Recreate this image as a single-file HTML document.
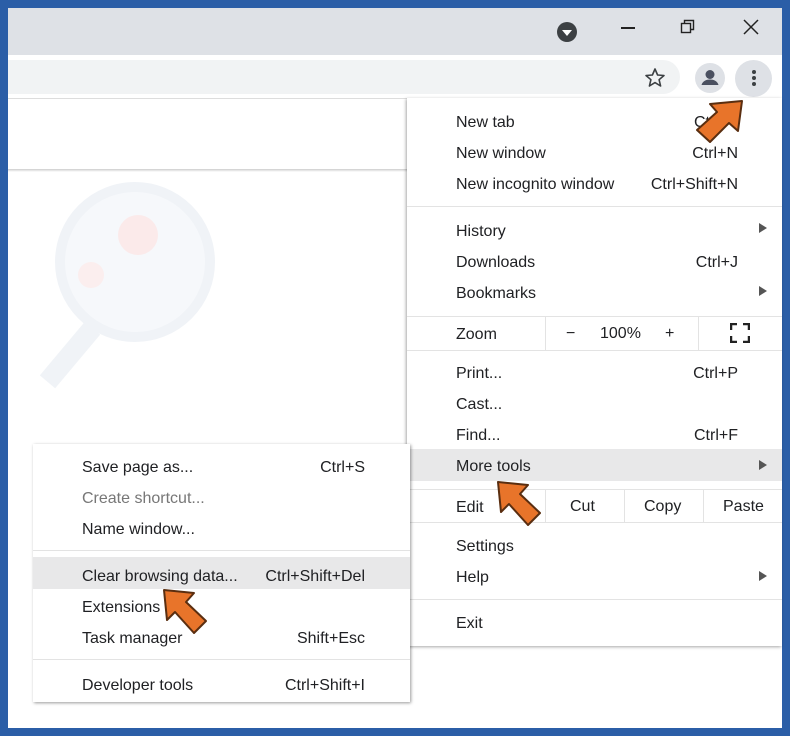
<!DOCTYPE html><html><head><style>
*{margin:0;padding:0;box-sizing:border-box}
body{width:790px;height:736px;background:#2b5ea7;position:relative;overflow:hidden;font-family:"Liberation Sans",sans-serif;color:#202124;font-size:16px}
.a{position:absolute}
.win{left:8px;top:8px;width:774px;height:720px;background:#fff}
.t{position:absolute;white-space:nowrap;line-height:20px;margin-top:2px}
.sep{position:absolute;height:1px;background:#e3e3e3}
.sc{position:absolute;white-space:nowrap;line-height:20px;text-align:right;margin-top:2px}
</style></head><body>
<div class="a win"></div>
<div class="a" style="left:8px;top:8px;width:774px;height:47px;background:#dee1e6"></div>
<div class="a" style="left:8px;top:55px;width:774px;height:43px;background:#fff"></div>
<div class="a" style="left:8px;top:60px;width:672px;height:34px;background:#f1f3f4;border-radius:0 17px 17px 0"></div>
<div class="a" style="left:8px;top:98px;width:399px;height:1px;background:#ddd"></div>
<div class="a" style="left:8px;top:169px;width:399px;height:3px;background:linear-gradient(#ccc,#fff)"></div>
<div class="a" style="left:55px;top:182px;width:160px;height:160px;border-radius:50%;border:10px solid #f0f3f7;background:#f6f8fb"></div>
<div class="a" style="left:118px;top:215px;width:40px;height:40px;border-radius:50%;background:#fbeaea"></div>
<div class="a" style="left:78px;top:262px;width:26px;height:26px;border-radius:50%;background:#fbeeee"></div>
<div class="a" style="left:60px;top:320px;width:20px;height:70px;background:#f0f3f7;transform:rotate(40deg)"></div>
<!-- title bar icons -->
<svg class="a" style="left:556px;top:21px" width="22" height="22"><circle cx="11" cy="11" r="10" fill="#3c4043"/><path d="M6 9h10l-5 6z" fill="#fff"/></svg>
<div class="a" style="left:621px;top:27px;width:14px;height:1.5px;background:#222"></div>
<svg class="a" style="left:680px;top:19px" width="16" height="16"><rect x="1.5" y="4.5" width="9" height="9" fill="none" stroke="#222" stroke-width="1.4"/><path d="M4.5 4.5V1.5h9v9h-3" fill="none" stroke="#222" stroke-width="1.4"/></svg>
<svg class="a" style="left:743px;top:19px" width="16" height="16"><path d="M1 1L15 15M15 1L1 15" stroke="#222" stroke-width="1.5"/></svg>
<svg class="a" style="left:644px;top:67px" width="22" height="22"><path d="M11 2l2.6 6 6.4.5-4.9 4.2 1.5 6.3L11 15.6 5.4 19l1.5-6.3L2 8.5l6.4-.5z" fill="none" stroke="#3c4043" stroke-width="1.6" stroke-linejoin="round"/></svg>
<svg class="a" style="left:694px;top:62px" width="32" height="32"><circle cx="16" cy="16" r="15" fill="#dee1e6"/><circle cx="16" cy="12.5" r="4.5" fill="#4a5060"/><path d="M7.5 23c1-4 5-5.5 8.5-5.5s7.5 1.5 8.5 5.5z" fill="#4a5060"/></svg>
<div class="a" style="left:735px;top:60px;width:37px;height:37px;border-radius:50%;background:#dee1e6"></div>
<div class="a" style="left:752px;top:70px;width:4px;height:4px;border-radius:50%;background:#3c4043;box-shadow:0 6px 0 #3c4043,0 12px 0 #3c4043"></div>
<!-- main menu -->
<div class="a" style="left:407px;top:98px;width:375px;height:548px;background:#fff;box-shadow:-1px 1px 3px rgba(0,0,0,.35)"></div>
<div class="a" style="left:407px;top:449px;width:375px;height:32px;background:#e8e8e9"></div>
<div class="t" style="left:456px;top:111px">New tab</div><div class="sc" style="left:600px;top:111px;width:138px">Ctrl+T</div>
<div class="t" style="left:456px;top:142px">New window</div><div class="sc" style="left:600px;top:142px;width:138px">Ctrl+N</div>
<div class="t" style="left:456px;top:173px">New incognito window</div><div class="sc" style="left:600px;top:173px;width:138px">Ctrl+Shift+N</div>
<div class="sep" style="left:407px;top:206px;width:375px"></div>
<div class="t" style="left:456px;top:220px">History</div>
<div class="t" style="left:456px;top:251px">Downloads</div><div class="sc" style="left:600px;top:251px;width:138px">Ctrl+J</div>
<div class="t" style="left:456px;top:282px">Bookmarks</div>
<div class="sep" style="left:407px;top:316px;width:375px"></div>
<div class="t" style="left:456px;top:323px">Zoom</div>
<div class="a" style="left:545px;top:316px;width:1px;height:34px;background:#e3e3e3"></div>
<div class="a" style="left:698px;top:316px;width:1px;height:34px;background:#e3e3e3"></div>
<div class="t" style="left:566px;top:322px">−</div>
<div class="t" style="left:600px;top:322px">100%</div>
<div class="t" style="left:665px;top:322px">+</div>
<svg class="a" style="left:730px;top:323px" width="20" height="20"><path d="M1 7V1h6M13 1h6v6M19 13v6h-6M7 19H1v-6" fill="none" stroke="#222" stroke-width="2.5"/></svg>
<div class="sep" style="left:407px;top:350px;width:375px"></div>
<div class="t" style="left:456px;top:362px">Print...</div><div class="sc" style="left:600px;top:362px;width:138px">Ctrl+P</div>
<div class="t" style="left:456px;top:393px">Cast...</div>
<div class="t" style="left:456px;top:424px">Find...</div><div class="sc" style="left:600px;top:424px;width:138px">Ctrl+F</div>
<div class="t" style="left:456px;top:455px">More tools</div>
<div class="sep" style="left:407px;top:489px;width:375px"></div>
<div class="t" style="left:456px;top:496px">Edit</div>
<div class="a" style="left:545px;top:489px;width:1px;height:33px;background:#e3e3e3"></div>
<div class="a" style="left:624px;top:489px;width:1px;height:33px;background:#e3e3e3"></div>
<div class="a" style="left:703px;top:489px;width:1px;height:33px;background:#e3e3e3"></div>
<div class="t" style="left:570px;top:495px">Cut</div>
<div class="t" style="left:644px;top:495px">Copy</div>
<div class="t" style="left:723px;top:495px">Paste</div>
<div class="sep" style="left:407px;top:522px;width:375px"></div>
<div class="t" style="left:456px;top:535px">Settings</div>
<div class="t" style="left:456px;top:566px">Help</div>
<div class="sep" style="left:407px;top:599px;width:375px"></div>
<div class="t" style="left:456px;top:612px">Exit</div>
<svg class="a" style="left:758px;top:222px" width="10" height="12"><path d="M1 1l8 5-8 5z" fill="#555"/></svg>
<svg class="a" style="left:758px;top:285px" width="10" height="12"><path d="M1 1l8 5-8 5z" fill="#555"/></svg>
<svg class="a" style="left:758px;top:459px" width="10" height="12"><path d="M1 1l8 5-8 5z" fill="#555"/></svg>
<svg class="a" style="left:758px;top:570px" width="10" height="12"><path d="M1 1l8 5-8 5z" fill="#555"/></svg>
<!-- submenu -->
<div class="a" style="left:33px;top:444px;width:377px;height:258px;background:#fff;box-shadow:1px 1px 3px rgba(0,0,0,.4)"></div>
<div class="a" style="left:33px;top:557px;width:377px;height:32px;background:#e8e8e9"></div>
<div class="t" style="left:82px;top:456px">Save page as...</div><div class="sc" style="left:230px;top:456px;width:135px">Ctrl+S</div>
<div class="t" style="left:82px;top:487px;color:#777">Create shortcut...</div>
<div class="t" style="left:82px;top:518px">Name window...</div>
<div class="sep" style="left:33px;top:550px;width:377px"></div>
<div class="t" style="left:82px;top:565px">Clear browsing data...</div><div class="sc" style="left:230px;top:565px;width:135px">Ctrl+Shift+Del</div>
<div class="t" style="left:82px;top:596px">Extensions</div>
<div class="t" style="left:82px;top:627px">Task manager</div><div class="sc" style="left:230px;top:627px;width:135px">Shift+Esc</div>
<div class="sep" style="left:33px;top:659px;width:377px"></div>
<div class="t" style="left:82px;top:674px">Developer tools</div><div class="sc" style="left:230px;top:674px;width:135px">Ctrl+Shift+I</div>
<!-- arrows -->
<svg class="a" style="left:690px;top:95px" width="60" height="55"><path d="M52 6L48 36 39 28 20 47 7 35 27 17 20 9z" fill="#e8742a" stroke="#5a2e10" stroke-width="2" stroke-linejoin="round"/></svg>
<svg class="a" style="left:492px;top:476px" width="60" height="55"><path d="M6 6L36 9 28 18 48 37 36 49 17 28 9 36z" fill="#e8742a" stroke="#5a2e10" stroke-width="2" stroke-linejoin="round"/></svg>
<svg class="a" style="left:158px;top:584px" width="60" height="55"><path d="M6 6L36 9 28 18 48 37 36 49 17 28 9 36z" fill="#e8742a" stroke="#5a2e10" stroke-width="2" stroke-linejoin="round"/></svg>
</body></html>
